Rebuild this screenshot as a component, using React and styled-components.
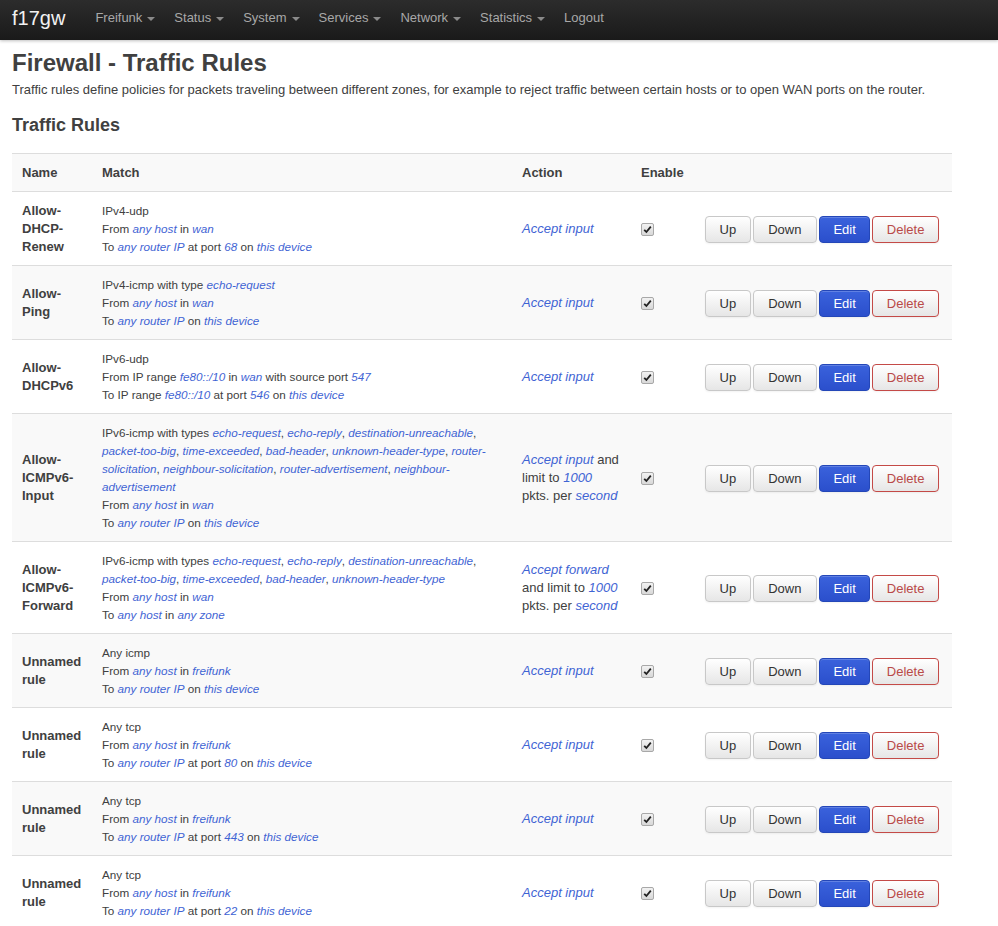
import React from 'react';
import styled, { createGlobalStyle } from 'styled-components';

const GlobalStyle = createGlobalStyle`
  body {
    margin: 0;
    background: #fff;
    font-family: "Liberation Sans", Arial, sans-serif;
    font-size: 13px;
    line-height: 18px;
    color: #404040;
  }
`;

const NavBar = styled.div`
  height: 40px;
  box-sizing: border-box;
  padding: 0 12px 4px;
  background: linear-gradient(to bottom, #2c2c2c, #1a1a1a);
  box-shadow: 0 1px 3px rgba(0, 0, 0, 0.25);
  display: flex;
  align-items: center;
`;

const Brand = styled.a`
  color: #f2f2f2;
  font-size: 20px;
  line-height: 36px;
  margin-right: 20.5px;
  text-decoration: none;
`;

const NavItem = styled.a`
  color: #a8a8a8;
  font-size: 13px;
  line-height: 36px;
  padding: 0 9.5px;
  display: flex;
  align-items: center;
  text-decoration: none;
`;

const Caret = styled.span`
  display: inline-block;
  margin-left: 5px;
  margin-top: 2px;
  border-left: 4px solid transparent;
  border-right: 4px solid transparent;
  border-top: 4px solid #8a8a8a;
`;

const Container = styled.div`
  padding: 0 12px;
`;

const Title = styled.h1`
  font-size: 24px;
  line-height: 36px;
  font-weight: bold;
  margin: 5px 0 0;
`;

const Description = styled.p`
  margin: 0;
  line-height: 17px;
`;

const SectionTitle = styled.h2`
  font-size: 18px;
  line-height: 36px;
  font-weight: bold;
  margin: 9px 0 10px;
`;

const Table = styled.table`
  width: 940px;
  border-collapse: collapse;
  table-layout: fixed;
`;

const HeadCell = styled.th`
  text-align: left;
  font-weight: bold;
  background: #f9f9f9;
  border-top: 1px solid #ddd;
  padding: 10px 10px 9px;
  vertical-align: middle;
`;

const Row = styled.tr`
  background: ${(p) => (p.$striped ? '#f9f9f9' : '#fff')};
`;

const Cell = styled.td`
  border-top: 1px solid #ddd;
  padding: 10px 10px 9px;
  vertical-align: middle;
`;

const NameCell = styled(Cell)`
  font-weight: bold;
`;

const MatchCell = styled(Cell)`
  font-size: 11.7px;
`;

const ButtonCell = styled(Cell)`
  white-space: nowrap;
`;

const Var = styled.var`
  color: #3f64d4;
  font-style: italic;
`;

const Check = styled.span`
  display: inline-block;
  width: 11px;
  height: 11px;
  border: 1px solid #a8a8a8;
  border-radius: 2px;
  background: linear-gradient(to bottom, #f2f2f2, #d8d8d8);
  position: relative;
  vertical-align: middle;
  svg {
    position: absolute;
    left: 1px;
    top: 1px;
  }
`;

const Button = styled.button`
  font-family: "Liberation Sans", Arial, sans-serif;
  font-size: 13px;
  line-height: 17px;
  padding: 4px ${(p) => p.$pad || 13.5}px;
  margin-right: 2px;
  border-radius: 4px;
  border: 1px solid ${(p) => (p.$variant === 'primary' ? '#2447b8' : p.$variant === 'danger' ? '#c44a47' : '#c8c8c8')};
  color: ${(p) => (p.$variant === 'primary' ? '#fff' : p.$variant === 'danger' ? '#b94a48' : '#333')};
  background: ${(p) =>
    p.$variant === 'primary'
      ? 'linear-gradient(to bottom, #3a62dc, #2b4fcc)'
      : 'linear-gradient(to bottom, #fff, #e6e6e6)'};
  box-shadow: inset 0 1px 0 rgba(255, 255, 255, 0.2), 0 1px 2px rgba(0, 0, 0, 0.05);
  cursor: pointer;
`;

const CheckBox = () => (
  <Check>
    <svg width="9" height="9" viewBox="0 0 9 9">
      <path d="M1.2 4.8 L3.4 7 L7.8 1.6" fill="none" stroke="#222" strokeWidth="1.8" />
    </svg>
  </Check>
);

const thisDevice = <Var>this device</Var>;

const rules = [
  {
    name: 'Allow-DHCP-Renew',
    match: [
      <>IPv4-udp</>,
      <>From <Var>any host</Var> in <Var>wan</Var></>,
      <>To <Var>any router IP</Var> at port <Var>68</Var> on {thisDevice}</>,
    ],
    action: <Var>Accept input</Var>,
  },
  {
    name: 'Allow-Ping',
    match: [
      <>IPv4-icmp with type <Var>echo-request</Var></>,
      <>From <Var>any host</Var> in <Var>wan</Var></>,
      <>To <Var>any router IP</Var> on {thisDevice}</>,
    ],
    action: <Var>Accept input</Var>,
  },
  {
    name: 'Allow-DHCPv6',
    match: [
      <>IPv6-udp</>,
      <>From IP range <Var>fe80::/10</Var> in <Var>wan</Var> with source port <Var>547</Var></>,
      <>To IP range <Var>fe80::/10</Var> at port <Var>546</Var> on {thisDevice}</>,
    ],
    action: <Var>Accept input</Var>,
  },
  {
    name: 'Allow-ICMPv6-Input',
    match: [
      <>
        IPv6-icmp with types <Var>echo-request</Var>, <Var>echo-reply</Var>, <Var>destination-unreachable</Var>,{' '}
        <Var>packet-too-big</Var>, <Var>time-exceeded</Var>, <Var>bad-header</Var>, <Var>unknown-header-type</Var>,{' '}
        <Var>router-solicitation</Var>, <Var>neighbour-solicitation</Var>, <Var>router-advertisement</Var>,{' '}
        <Var>neighbour-advertisement</Var>
      </>,
      <>From <Var>any host</Var> in <Var>wan</Var></>,
      <>To <Var>any router IP</Var> on {thisDevice}</>,
    ],
    action: <><Var>Accept input</Var> and limit to <Var>1000</Var> pkts. per <Var>second</Var></>,
  },
  {
    name: 'Allow-ICMPv6-Forward',
    match: [
      <>
        IPv6-icmp with types <Var>echo-request</Var>, <Var>echo-reply</Var>, <Var>destination-unreachable</Var>,{' '}
        <Var>packet-too-big</Var>, <Var>time-exceeded</Var>, <Var>bad-header</Var>, <Var>unknown-header-type</Var>
      </>,
      <>From <Var>any host</Var> in <Var>wan</Var></>,
      <>To <Var>any host</Var> in <Var>any zone</Var></>,
    ],
    action: <><Var>Accept forward</Var> and limit to <Var>1000</Var> pkts. per <Var>second</Var></>,
  },
  {
    name: 'Unnamed rule',
    match: [
      <>Any icmp</>,
      <>From <Var>any host</Var> in <Var>freifunk</Var></>,
      <>To <Var>any router IP</Var> on {thisDevice}</>,
    ],
    action: <Var>Accept input</Var>,
  },
  ...['80', '443', '22'].map((port) => ({
    name: 'Unnamed rule',
    match: [
      <>Any tcp</>,
      <>From <Var>any host</Var> in <Var>freifunk</Var></>,
      <>To <Var>any router IP</Var> at port <Var>{port}</Var> on {thisDevice}</>,
    ],
    action: <Var>Accept input</Var>,
  })),
];

const menu = ['Freifunk', 'Status', 'System', 'Services', 'Network', 'Statistics'];

const App = () => (
  <>
    <GlobalStyle />
    <NavBar>
      <Brand href="#">f17gw</Brand>
      {menu.map((m) => (
        <NavItem key={m} href="#">
          {m}
          <Caret />
        </NavItem>
      ))}
      <NavItem href="#">Logout</NavItem>
    </NavBar>
    <Container>
      <Title>Firewall - Traffic Rules</Title>
      <Description>
        Traffic rules define policies for packets traveling between different zones, for example to reject traffic
        between certain hosts or to open WAN ports on the router.
      </Description>
      <SectionTitle>Traffic Rules</SectionTitle>
      <Table>
        <colgroup>
          <col style={{ width: 80 }} />
          <col style={{ width: 420 }} />
          <col style={{ width: 119 }} />
          <col style={{ width: 64 }} />
          <col style={{ width: 257 }} />
        </colgroup>
        <thead>
          <tr>
            <HeadCell>Name</HeadCell>
            <HeadCell>Match</HeadCell>
            <HeadCell>Action</HeadCell>
            <HeadCell>Enable</HeadCell>
            <HeadCell />
          </tr>
        </thead>
        <tbody>
          {rules.map((r, i) => (
            <Row key={i} $striped={i % 2 === 1}>
              <NameCell>{r.name}</NameCell>
              <MatchCell>
                {r.match.map((line, j) => (
                  <div key={j}>{line}</div>
                ))}
              </MatchCell>
              <Cell>{r.action}</Cell>
              <Cell>
                <CheckBox />
              </Cell>
              <ButtonCell>
                <Button>Up</Button>
                <Button $pad={14.5}>Down</Button>
                <Button $variant="primary">Edit</Button>
                <Button $variant="danger">Delete</Button>
              </ButtonCell>
            </Row>
          ))}
        </tbody>
      </Table>
    </Container>
  </>
);

export default App;
